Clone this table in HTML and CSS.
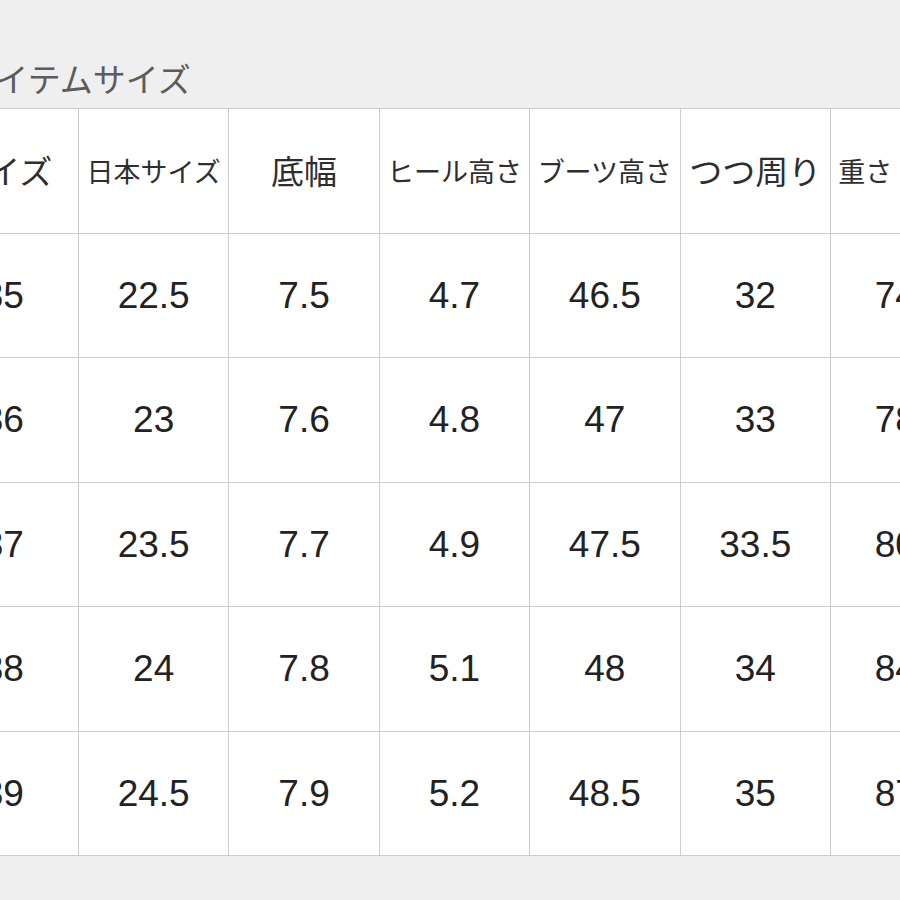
FILE: index.html
```html
<!DOCTYPE html>
<html lang="ja">
<head>
<meta charset="utf-8">
<title>アイテムサイズ</title>
<link rel="stylesheet" href="styles.css">
</head>
<body>
<div class="page">
  <div class="title">アイテムサイズ</div>
  <table class="size-table">
    <colgroup>
      <col class="c"><col class="c"><col class="c"><col class="c"><col class="c"><col class="c"><col class="c">
    </colgroup>
    <thead>
      <tr>
        <th class="lg">サイズ</th>
        <th class="sm">日本サイズ</th>
        <th class="lg">底幅</th>
        <th class="sm">ヒール高さ</th>
        <th class="sm">ブーツ高さ</th>
        <th class="lg">つつ周り</th>
        <th class="sm">重さ（ｇ）</th>
      </tr>
    </thead>
    <tbody>
      <tr><td>35</td><td>22.5</td><td>7.5</td><td>4.7</td><td>46.5</td><td>32</td><td>740</td></tr>
      <tr><td>36</td><td>23</td><td>7.6</td><td>4.8</td><td>47</td><td>33</td><td>780</td></tr>
      <tr><td>37</td><td>23.5</td><td>7.7</td><td>4.9</td><td>47.5</td><td>33.5</td><td>800</td></tr>
      <tr><td>38</td><td>24</td><td>7.8</td><td>5.1</td><td>48</td><td>34</td><td>840</td></tr>
      <tr><td>39</td><td>24.5</td><td>7.9</td><td>5.2</td><td>48.5</td><td>35</td><td>870</td></tr>
    </tbody>
  </table>
</div>
</body>
</html>
```
FILE: styles.css
```css
html, body {
  margin: 0;
  padding: 0;
  background: #efefef;
}
body {
  width: 900px;
  height: 900px;
  overflow: hidden;
}
.page {
  width: 900px;
  height: 900px;
  overflow: hidden;
  padding-top: 0;
}
.title {
  height: 108px;
  box-sizing: border-box;
  padding-top: 56px;
  margin-left: -36px;
  font-family: "Noto Sans CJK JP", sans-serif;
  font-size: 33px;
  line-height: 44px;
  color: #5c5c5c;
  white-space: nowrap;
}
.size-table {
  margin-left: -72.4px;
  border-collapse: collapse;
  table-layout: fixed;
  width: 1053px;
  background: #ffffff;
}
.size-table col.c {
  width: 150.4px;
}
.size-table th,
.size-table td {
  border: 1px solid #cdcdcd;
  height: 123.5px;
  padding: 0;
  text-align: center;
  vertical-align: middle;
  white-space: nowrap;
  overflow: hidden;
}
.size-table th {
  font-family: "Noto Sans CJK JP", sans-serif;
  font-weight: 400;
  color: #2e2e2e;
  line-height: 1;
}
.size-table th.lg {
  font-size: 33px;
}
.size-table th.sm {
  font-size: 27px;
}
.size-table td {
  font-family: "Liberation Sans", Arial, sans-serif;
  font-size: 37px;
  color: #222222;
  line-height: 1;
}
```
